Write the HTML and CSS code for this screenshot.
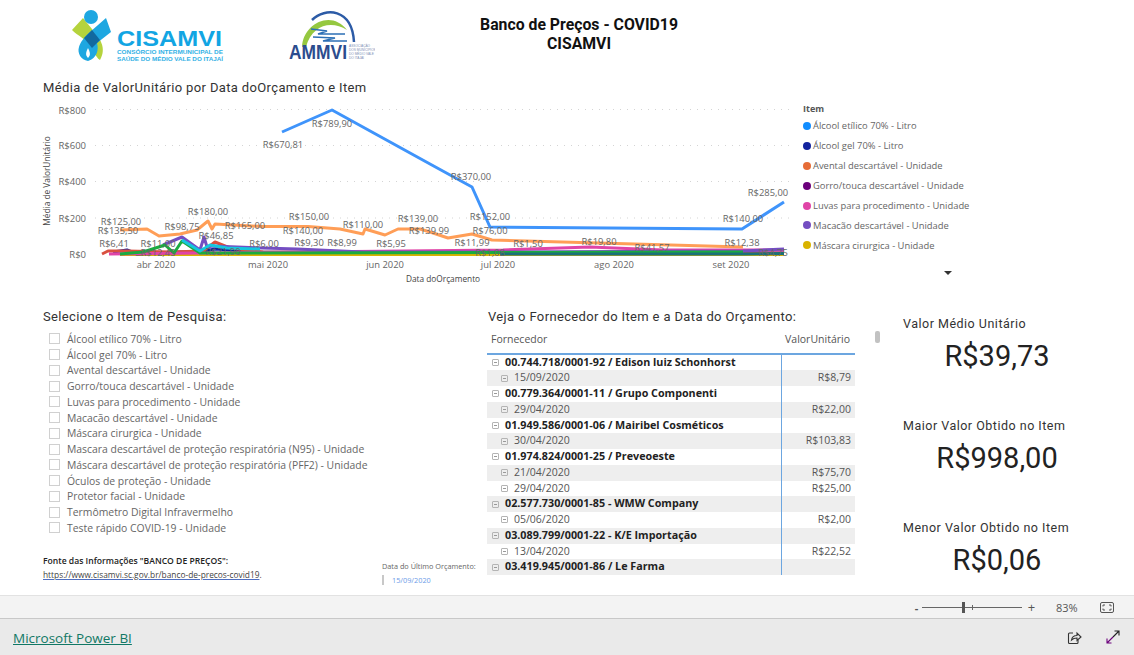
FILE: index.html
```html
<!DOCTYPE html>
<html lang="pt-BR">
<head>
<meta charset="utf-8">
<title>Banco de Preços - COVID19</title>
<link rel="stylesheet" href="styles.css">
</head>
<body>
<main class="canvas">
  <header class="head">
    <svg class="logos" viewBox="70 5 305 60" width="305" height="60" aria-label="CISAMVI e AMMVI">
      <path class="lg-green" d="M72 30 L83 18 L92 29 C100 38 107 48 100 60 C95 57 94 50 91 46 C87 40 78 36 72 30 Z"/>
      <path class="lg-blue" d="M106 18 L111 32 L97 43 C99 50 97 58 88 61 C81 60 77 53 79 47 C80 43 84 37 90 32 Z"/>
      <path class="lg-white" d="M88 48 C90 52 91 55 88 58 C85 55 86 52 88 48 Z"/>
      <path class="lg-dark" d="M92 30 L100 40 L92 48 L84 38 Z"/>
      <circle class="lg-blue" cx="91" cy="17" r="7"/>
      <text class="cis-name" x="117" y="46" textLength="105" lengthAdjust="spacingAndGlyphs">CISAMVI</text>
      <text class="cis-sub" x="117" y="54" textLength="106" lengthAdjust="spacingAndGlyphs">CONSÓRCIO INTERMUNICIPAL DE</text>
      <text class="cis-sub" x="117" y="61" textLength="106" lengthAdjust="spacingAndGlyphs">SAÚDE DO MÉDIO VALE DO ITAJAÍ</text>
      <path class="am-arc-blue" d="M312 20 C325 7 352 8 354 42"/>
      <path class="am-arc-green" d="M302 47 C303 24 331 9 347 30 C331 20 312 25 306 47 Z"/>
      <path class="am-river" d="M311 29 L327 31 L318 34 L345 34 M313 37 L335 38 L323 41 L347 41"/>
      <text class="am-name" x="289" y="59" textLength="58" lengthAdjust="spacingAndGlyphs">AMMVI</text>
      <text class="am-sub" x="349" y="47">ASSOCIAÇÃO</text>
      <text class="am-sub" x="349" y="51">DOS MUNICÍPIOS</text>
      <text class="am-sub" x="349" y="55">DO MÉDIO VALE</text>
      <text class="am-sub" x="349" y="59">DO ITAJAÍ</text>
    </svg>
    <h1 class="report-title">Banco de Preços - COVID19<br>CISAMVI</h1>
  </header>

  <section class="chart-block">
    <h2 class="din-title chart-title">Média de ValorUnitário por Data doOrçamento e Item</h2>
    <div class="chart-row">
      <svg class="chart" viewBox="0 98 795 195" width="795" height="195" role="img">
        <g class="grid">
          <line x1="95" x2="790" y1="109.5" y2="109.5"/>
          <line x1="95" x2="790" y1="145.5" y2="145.5"/>
          <line x1="95" x2="790" y1="181.5" y2="181.5"/>
          <line x1="95" x2="790" y1="218" y2="218"/>
        </g>
        <g class="ytick">
          <text x="86" y="114">R$800</text>
          <text x="86" y="149">R$600</text>
          <text x="86" y="185">R$400</text>
          <text x="86" y="222">R$200</text>
          <text x="86" y="258">R$0</text>
        </g>
        <g class="xtick">
          <text x="156" y="268">abr 2020</text>
          <text x="268" y="268">mai 2020</text>
          <text x="385" y="268">jun 2020</text>
          <text x="498" y="268">jul 2020</text>
          <text x="614" y="268">ago 2020</text>
          <text x="731" y="268">set 2020</text>
        </g>
        <text class="axis-name" x="443" y="282">Data doOrçamento</text>
        <text class="axis-name" transform="translate(50 181) rotate(-90)">Média de ValorUnitário</text>
        <g class="series">
          <polyline class="s-gold" points="120,254.5 784,254.5"/>
          <polyline class="s-navy" points="113,252 127,250 137,254 180,252 200,252 215,249 260,252 784,253"/>
          <polyline class="s-red" points="102,254 108,251 127,251 170,252 203,251 215,242 230,248 263,252 784,253"/>
          <polyline class="s-pink" points="109,254 200,253 503,250 590,247 663,250 743,250 784,250"/>
          <polyline class="s-purple" points="163,245 182,237 200,250 204,237 207,247 212,246 263,248 297,249 363,252 500,252 743,251 784,249"/>
          <polyline class="s-orange" points="120,230 147,229 159,236 180,234 197,230 208,221 212,229 215,224 263,226.5 308,226.5 340,229 363,234 365,229 385,235 398,229 420,229 430,232 448,238 472,234 492,240 743,247"/>
          <polyline class="s-blue" points="282,132 332,110 430,164 472,187 490,227 742,229 784,202"/>
          <polyline class="s-green" points="120,254 143,252 165,245 174,253 182,241 200,253 743,252"/>
          <polyline class="s-cyan" points="182,240 200,251 210,245 227,248 260,249"/>
          <polyline class="s-teal" points="500,254 743,254 784,253.5"/>
        </g>
        <g class="dl">
          <text x="283" y="148">R$670,81</text>
          <text x="332" y="127">R$789,90</text>
          <text x="471" y="180">R$370,00</text>
          <text x="490" y="220">R$152,00</text>
          <text x="743" y="222">R$140,00</text>
          <text x="768" y="196">R$285,00</text>
          <text x="121" y="225">R$125,00</text>
          <text x="118" y="234">R$135,50</text>
          <text x="114" y="247">R$6,41</text>
          <text x="158" y="247">R$11,00</text>
          <text x="158" y="256">R$12,45</text>
          <text x="182" y="230">R$98,75</text>
          <text x="208" y="215">R$180,00</text>
          <text x="216" y="239">R$46,85</text>
          <text x="223" y="255">R$21,90</text>
          <text x="245" y="229">R$165,00</text>
          <text x="309" y="220">R$150,00</text>
          <text x="303" y="234">R$140,00</text>
          <text x="264" y="247">R$6,00</text>
          <text x="309" y="246">R$9,30</text>
          <text x="342" y="246">R$8,99</text>
          <text x="363" y="228">R$110,00</text>
          <text x="391" y="247">R$5,95</text>
          <text x="418" y="222">R$139,00</text>
          <text x="429" y="234">R$139,99</text>
          <text x="490" y="234">R$76,00</text>
          <text x="472" y="246">R$11,99</text>
          <text x="490" y="256">R$1,08</text>
          <text x="528" y="247">R$1,50</text>
          <text x="599" y="245">R$19,80</text>
          <text x="652" y="251">R$41,57</text>
          <text x="742" y="246">R$12,38</text>
          <text x="773" y="256">R$4,75</text>
        </g>
      </svg>
      <aside class="legend">
        <div class="legend-title">Item</div>
        <ul class="legend-list">
          <li><span class="dot d1"></span>Álcool etílico 70% - Litro</li>
          <li><span class="dot d2"></span>Álcool gel 70% - Litro</li>
          <li><span class="dot d3"></span>Avental descartável - Unidade</li>
          <li><span class="dot d4"></span>Gorro/touca descartável - Unidade</li>
          <li><span class="dot d5"></span>Luvas para procedimento - Unidade</li>
          <li><span class="dot d6"></span>Macacão descartável - Unidade</li>
          <li><span class="dot d7"></span>Máscara cirurgica - Unidade</li>
        </ul>
        <div class="legend-more"></div>
      </aside>
    </div>
  </section>

  <section class="lower">
    <div class="col-slicer">
      <h2 class="din-title">Selecione o Item de Pesquisa:</h2>
      <ul class="slicer">
        <li><span class="check"></span>Álcool etílico 70% - Litro</li>
        <li><span class="check"></span>Álcool gel 70% - Litro</li>
        <li><span class="check"></span>Avental descartável - Unidade</li>
        <li><span class="check"></span>Gorro/touca descartável - Unidade</li>
        <li><span class="check"></span>Luvas para procedimento - Unidade</li>
        <li><span class="check"></span>Macacão descartável - Unidade</li>
        <li><span class="check"></span>Máscara cirurgica - Unidade</li>
        <li><span class="check"></span>Mascara descartável de proteção respiratória (N95) - Unidade</li>
        <li><span class="check"></span>Máscara descartável de proteção respiratória (PFF2) - Unidade</li>
        <li><span class="check"></span>Óculos de proteção - Unidade</li>
        <li><span class="check"></span>Protetor facial - Unidade</li>
        <li><span class="check"></span>Termômetro Digital Infravermelho</li>
        <li><span class="check"></span>Teste rápido COVID-19 - Unidade</li>
      </ul>
      <div class="notes">
        <div class="source">
          <strong>Fonte das Informações "BANCO DE PREÇOS":</strong>
          <a href="#">https://www.cisamvi.sc.gov.br/banco-de-precos-covid19</a>.
        </div>
        <div class="last-date">
          <div>Data do Último Orçamento:</div>
          <div class="last-date-val">15/09/2020</div>
        </div>
      </div>
    </div>

    <div class="col-table">
      <h2 class="din-title">Veja o Fornecedor do Item e a Data do Orçamento:</h2>
      <div class="tbl">
        <div class="tr th"><span>Fornecedor</span><span class="num">ValorUnitário</span></div>
        <div class="tr group"><span><i class="exp"></i>00.744.718/0001-92 / Edison luiz Schonhorst</span><span class="num"></span></div>
        <div class="tr child band"><span><i class="exp"></i>15/09/2020</span><span class="num">R$8,79</span></div>
        <div class="tr group"><span><i class="exp"></i>00.779.364/0001-11 / Grupo Componenti</span><span class="num"></span></div>
        <div class="tr child band"><span><i class="exp"></i>29/04/2020</span><span class="num">R$22,00</span></div>
        <div class="tr group"><span><i class="exp"></i>01.949.586/0001-06 / Mairibel Cosméticos</span><span class="num"></span></div>
        <div class="tr child band"><span><i class="exp"></i>30/04/2020</span><span class="num">R$103,83</span></div>
        <div class="tr group"><span><i class="exp"></i>01.974.824/0001-25 / Preveoeste</span><span class="num"></span></div>
        <div class="tr child band"><span><i class="exp"></i>21/04/2020</span><span class="num">R$75,70</span></div>
        <div class="tr child"><span><i class="exp"></i>29/04/2020</span><span class="num">R$25,00</span></div>
        <div class="tr group band"><span><i class="exp"></i>02.577.730/0001-85 - WMW Company</span><span class="num"></span></div>
        <div class="tr child"><span><i class="exp"></i>05/06/2020</span><span class="num">R$2,00</span></div>
        <div class="tr group band"><span><i class="exp"></i>03.089.799/0001-22 - K/E Importação</span><span class="num"></span></div>
        <div class="tr child"><span><i class="exp"></i>13/04/2020</span><span class="num">R$22,52</span></div>
        <div class="tr group band"><span><i class="exp"></i>03.419.945/0001-86 / Le Farma</span><span class="num"></span></div>
      </div>
    </div>

    <div class="col-scroll"><div class="thumb"></div></div>

    <div class="col-cards">
      <div class="card"><div class="card-label">Valor Médio Unitário</div><div class="card-value">R$39,73</div></div>
      <div class="card"><div class="card-label">Maior Valor Obtido no Item</div><div class="card-value">R$998,00</div></div>
      <div class="card"><div class="card-label">Menor Valor Obtido no Item</div><div class="card-value">R$0,06</div></div>
    </div>
  </section>
</main>

<div class="statusbar">
  <span class="zoom-sign minus">-</span>
  <div class="slider"><span class="slider-tick"></span><span class="slider-thumb"></span></div>
  <span class="zoom-sign plus">+</span>
  <span class="zoom-val">83%</span>
  <svg class="fit" viewBox="0 0 14 11" width="14" height="11">
    <rect x="0.5" y="0.5" width="13" height="10" rx="1.5"/>
    <path d="M3 4.500V3h2M9 3h2v1.500M11 6.500V8H9M5 8H3V6.500"/>
  </svg>
</div>

<footer class="pbi">
  <a href="#" class="pbi-link">Microsoft Power BI</a>
  <div class="pbi-actions">
    <svg class="share" viewBox="0 0 15 15" width="15" height="15">
      <path d="M6 3H2.500A1 1 0 0 0 1.500 4v8.500a1 1 0 0 0 1 1H10a1 1 0 0 0 1-1V10"/>
      <path d="M4.500 10C5 7 7.500 5.500 10 5.500V3l4 4-4 3.500V8C8 8 6 8.500 4.500 10Z"/>
    </svg>
    <svg class="expand" viewBox="0 0 14 14" width="14" height="14">
      <path class="ex-a" d="M8.500 1H13V5.500M13 1L7 7"/>
      <path class="ex-b" d="M5.500 13H1V8.500M1 13L7 7"/>
    </svg>
  </div>
</footer>
</body>
</html>
```
FILE: styles.css
```css
* { box-sizing: border-box; }
html, body { margin: 0; padding: 0; }
body {
  width: 1134px;
  height: 655px;
  overflow: hidden;
  display: flex;
  flex-direction: column;
  background: #fff;
  font-family: "Open Sans", "Noto Sans", sans-serif;
  color: #666;
}
ul { list-style: none; margin: 0; padding: 0; }
h1, h2 { margin: 0; font-weight: 400; }

.canvas { height: 595px; flex: none; }

.head { display: flex; height: 78px; align-items: flex-start; padding: 5px 0 0 70px; }
.logos { display: block; flex: none; }
.report-title {
  margin: 10px 0 0 105px;
  width: 198px;
  text-align: center;
  font: 700 15.800px/19px Roboto, sans-serif;
  color: #111;
  white-space: nowrap;
}

.lg-green { fill: #b5d33d; }
.lg-blue { fill: #1ea7e1; }
.lg-dark { fill: #12699f; }
.lg-white { fill: #fff; }
.cis-name { font: 700 22px "Liberation Sans", sans-serif; fill: #12a5e3; }
.cis-sub { font: 700 6px "Liberation Sans", sans-serif; fill: #33b1e5; }
.am-arc-blue { fill: none; stroke: #2c5ba6; stroke-width: 2.500; }
.am-arc-green { fill: #95c840; }
.am-river { fill: none; stroke: #2c6fb5; stroke-width: 1.500; }
.am-name { font: 700 20px "Liberation Sans", sans-serif; fill: #2b4c8e; }
.am-sub { font: 400 3.200px "Liberation Sans", sans-serif; fill: #7d8fb5; }

.din-title {
  font: 400 13px/20px Roboto, sans-serif;
  letter-spacing: 0.36px;
  color: #333;
  white-space: nowrap;
}
.chart-title { margin-left: 43px; }

.chart-row { display: flex; height: 195px; }
.chart { display: block; flex: none; }
.grid line { stroke: #d4d4d4; stroke-width: 1; stroke-dasharray: 1 6; }
.ytick text { font-size: 9.500px; fill: #666; text-anchor: end; }
.xtick text { font-size: 9.400px; fill: #666; text-anchor: middle; }
.axis-name { font-size: 8.300px; fill: #444; text-anchor: middle; }
.dl text { font-size: 9.400px; fill: #666; text-anchor: middle; }
.series polyline { fill: none; stroke-width: 3; stroke-linejoin: round; }
.s-blue { stroke: #3f94fb; }
.s-navy { stroke: #12239e; }
.s-red { stroke: #d9503f; }
.s-pink { stroke: #e044a7; }
.s-purple { stroke: #744ec2; }
.s-gold { stroke: #d9b300; }
.s-orange { stroke: #ff9e57; }
.s-green { stroke: #1aab40; }
.s-cyan { stroke: #15c6de; }
.s-teal { stroke: #197278; }

.legend { padding: 5px 0 0 8px; width: 339px; position: relative; }
.legend-title { font-size: 9px; font-weight: 700; line-height: 12px; color: #555; }
.legend-list { margin-top: 1px; }
.legend-list li {
  display: flex;
  align-items: center;
  height: 19.900px;
  font-size: 9.400px;
  color: #666;
  white-space: nowrap;
}
.dot { width: 8px; height: 8px; border-radius: 50%; margin-right: 2px; flex: none; }
.d1 { background: #118dff; }
.d2 { background: #12239e; }
.d3 { background: #e66c37; }
.d4 { background: #6b007b; }
.d5 { background: #e044a7; }
.d6 { background: #744ec2; }
.d7 { background: #d9b300; }
.legend-more {
  width: 0; height: 0;
  margin: 16px 0 0 141px;
  border-left: 4px solid transparent;
  border-right: 4px solid transparent;
  border-top: 4px solid #333;
}

.lower {
  display: grid;
  grid-template-columns: 487px 368px 48px 1fr;
  height: 302px;
  padding-top: 14px;
}
.col-slicer { padding-left: 43px; }
.slicer { margin-top: 4px; }
.slicer li {
  display: flex;
  align-items: center;
  height: 15.750px;
  padding-left: 6px;
  font-size: 10.400px;
  color: #666;
  white-space: nowrap;
}
.check { width: 11px; height: 11px; border: 1px solid #d0d0d0; margin-right: 7px; flex: none; }

.notes { display: flex; margin-top: 18px; }
.source { width: 339px; font-size: 8.350px; line-height: 14px; color: #444; }
.source strong { display: block; color: #222; font-size: 8.600px; font-weight: 600; }
.source a { color: #444; text-decoration-color: #4f6fc0; }
.last-date { font-size: 7.300px; line-height: 14px; padding-top: 5px; white-space: nowrap; }
.last-date-val {
  color: #6d9ce8;
  padding-left: 8px;
  border-left: 2px solid #c8c8c8;
  height: 10px;
  line-height: 10px;
  margin-top: 2px;
}

.col-table { min-width: 0; }
.col-table .din-title { margin-left: 1px; }
.tbl { margin-top: 4px; }
.tr {
  display: grid;
  grid-template-columns: 294px 74px;
  height: 15.750px;
  line-height: 15.750px;
  font-size: 10.500px;
  color: #555;
  white-space: nowrap;
}
.tr > span:first-child { display: flex; align-items: center; }
.num { text-align: right; padding-right: 4px; border-left: 1px solid #6ca6e0; }
.th { height: 23.500px; line-height: 16px; border-bottom: 2px solid #6ca6e0; }
.th > span { padding: 0 0 5px 4px; align-self: start; }
.th .num { border-left: 0; padding-right: 5px; }
.group > span:first-child { font-weight: 700; font-size: 10.750px; color: #222; padding-left: 5px; }
.child > span:first-child { padding-left: 14px; }
.band { background: #eeeeee; }
.exp {
  position: relative;
  flex: none;
  width: 7px;
  height: 7px;
  margin-right: 6px;
  border: 1px solid #b4b4b4;
  border-radius: 1px;
}
.exp::after {
  content: "";
  position: absolute;
  left: 1px;
  right: 1px;
  top: 2px;
  height: 1px;
  background: #999;
}

.thumb { width: 5px; height: 12px; margin: 24px 0 0 20px; background: #c2c2c2; border-radius: 2px; }

.col-cards { padding-top: 7px; }
.card { height: 102px; }
.card-label {
  font: 400 12.500px/20px Roboto, sans-serif;
  letter-spacing: 0.5px;
  color: #333;
  white-space: nowrap;
}
.card-value {
  width: 188px;
  margin-top: 4px;
  text-align: center;
  font: 400 29px/36px Roboto, sans-serif;
  color: #222;
}

.statusbar {
  flex: none;
  height: 24px;
  background: #f3f3f3;
  border-top: 1px solid #e2e2e2;
  border-bottom: 1px solid #c8c8c8;
  display: flex;
  align-items: center;
  padding-left: 911px;
  color: #555;
  font-size: 11px;
}
.zoom-sign { width: 9px; font-weight: 700; line-height: 1; text-align: center; }
.minus { width: 11px; }
.slider { position: relative; width: 100px; height: 1px; background: #666; margin: 0 5px 0 0; }
.slider-thumb { position: absolute; left: 40px; top: -5px; width: 3px; height: 11px; background: #555; }
.slider-tick { position: absolute; left: 50px; top: -2px; width: 1px; height: 5px; background: #666; }
.plus { font-size: 13px; font-weight: 400; }
.zoom-val { margin-left: 20px; width: 44px; }
.fit { fill: none; stroke: #555; stroke-width: 1; }

.pbi {
  flex: 1;
  background: #eaeaea;
  display: flex;
  align-items: center;
  justify-content: space-between;
  padding: 2px 14px 0 13px;
}
.pbi-link { color: #117865; font-size: 13.500px; font-weight: 500; }
.pbi-actions { display: flex; gap: 24px; align-items: center; margin-top: -2px; }
.share { fill: none; stroke: #333; stroke-width: 1.100; }
.expand { fill: none; stroke-width: 1.100; }
.ex-a { stroke: #222; }
.ex-b { stroke: #6b007b; }
```
